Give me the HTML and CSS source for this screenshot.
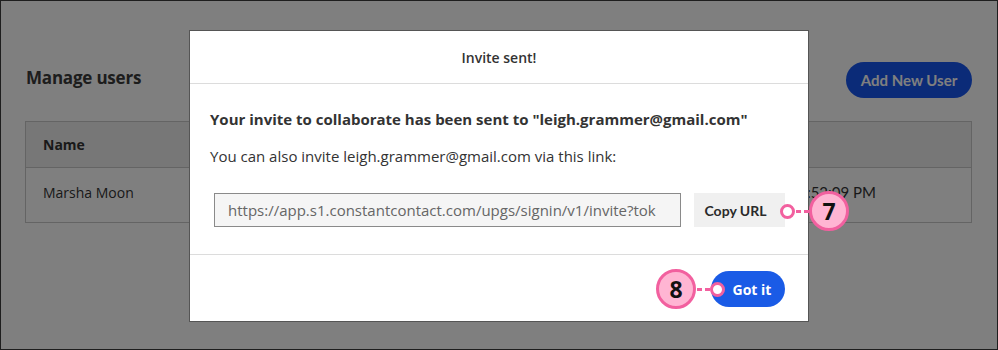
FILE: index.html
```html
<!DOCTYPE html>
<html>
<head>
<meta charset="utf-8">
<link rel="stylesheet" href="styles.css">
</head>
<body>
<div class="frame">
  <main class="page">
    <div class="page-head">
      <h1 class="title">Manage users</h1>
      <button class="add-btn">Add New User</button>
    </div>
    <div class="table">
      <div class="row head-row">
        <div class="cell name">Name</div>
        <div class="cell date"></div>
      </div>
      <div class="row body-row">
        <div class="cell name">Marsha Moon</div>
        <div class="cell date">1/15/2020, 12:52:09 PM</div>
      </div>
    </div>
  </main>
  <div class="overlay"></div>
  <div class="modal">
    <div class="modal-head">Invite sent!</div>
    <div class="modal-body">
      <p class="lead">Your invite to collaborate has been sent to "leigh.grammer@gmail.com"</p>
      <p class="sub">You can also invite leigh.grammer@gmail.com via this link:</p>
      <div class="link-row">
        <div class="url-box"><span class="url-text">https://app.s1.constantcontact.com/upgs/signin/v1/invite?tok</span></div>
        <button class="copy-btn">Copy URL</button>
      </div>
    </div>
    <div class="modal-foot">
      <button class="got-btn">Got it</button>
    </div>
  </div>
  <div class="callout c7">
    <span class="dot"></span><span class="dash"></span><span class="badge">7</span>
  </div>
  <div class="callout c8">
    <span class="badge">8</span><span class="dash"></span><span class="dot"></span>
  </div>
</div>
</body>
</html>
```
FILE: styles.css
```css
* { box-sizing: border-box; }
html, body { margin: 0; padding: 0; }
body {
  width: 998px;
  height: 350px;
  overflow: hidden;
  font-family: "Open Sans", "Noto Sans", sans-serif;
  background: #fff;
}
.frame {
  position: relative;
  width: 998px;
  height: 350px;
  border: 1px solid #1e1e1e;
  overflow: hidden;
}
.page {
  padding: 58px 25px 0 24px;
}
.page-head {
  display: flex;
  justify-content: space-between;
  align-items: center;
  height: 36px;
}
.title {
  margin: 0 0 0 1px;
  font-size: 17px;
  font-weight: 700;
  color: #3a3a3a;
  letter-spacing: -0.2px;
}
.add-btn {
  border: 0;
  background: #1656f0;
  color: #fff;
  font-family: "Lato", sans-serif;
  font-weight: 700;
  font-size: 15px;
  height: 36px;
  width: 126px;
  border-radius: 18px;
  margin-top: 6px;
}
.table {
  margin-top: 26px;
  border: 1px solid #c8c8c8;
}
.row {
  display: flex;
  justify-content: space-between;
  align-items: center;
  color: #333;
  font-size: 14px;
}
.head-row {
  height: 46px;
  background: #eeeeee;
  border-bottom: 1px solid #c8c8c8;
  font-weight: 700;
}
.body-row {
  height: 54px;
  padding-bottom: 6px;
}
.cell.name { padding-left: 17px; }
.cell.date { padding-right: 95px; font-family: "Lato", sans-serif; font-size: 15px; }
.overlay {
  position: absolute;
  inset: 0;
  background: rgba(0, 0, 0, 0.5);
}
.modal {
  position: absolute;
  left: 188px;
  top: 29px;
  width: 620px;
  height: 292px;
  background: #fff;
  border: 1px solid #555;
  display: flex;
  flex-direction: column;
  color: #333;
}
.modal-head {
  height: 53px;
  border-bottom: 1px solid #dcdcdc;
  display: flex;
  align-items: center;
  justify-content: center;
  font-size: 14px;
  font-weight: 600;
  color: #333;
}
.modal-body {
  padding: 24px 23px 0 20px;
  height: 171px;
  border-bottom: 1px solid #dcdcdc;
}
.lead {
  margin: 0;
  font-size: 15px;
  font-weight: 700;
  line-height: 22px;
}
.sub {
  margin: 15px 0 0;
  font-size: 15px;
  line-height: 22px;
}
.link-row {
  display: flex;
  gap: 13px;
  margin: 26px 0 0 4px;
}
.url-box {
  flex: 1;
  height: 34px;
  border: 1px solid #8a8a8a;
  background: #f5f5f5;
  padding: 0 0 0 13px;
  display: flex;
  align-items: center;
  overflow: hidden;
  white-space: nowrap;
}
.url-text {
  font-size: 15px;
  color: #666;
}
.copy-btn {
  width: 91px;
  height: 34px;
  border: 0;
  background: #f0f0f0;
  font-family: "Lato", sans-serif;
  font-weight: 700;
  font-size: 14px;
  color: #2a2a2a;
  padding: 0 8px 0 0;
}
.modal-foot {
  flex: 1;
  display: flex;
  justify-content: flex-end;
  align-items: flex-start;
  padding: 16px 23px 0 0;
}
.got-btn {
  width: 74px;
  height: 36px;
  border: 0;
  border-radius: 18px;
  background: #1a5be6;
  color: #fff;
  font-family: "Open Sans", sans-serif;
  font-weight: 700;
  font-size: 14px;
  padding: 0 0 0 8px;
}
.callout {
  position: absolute;
  display: flex;
  align-items: center;
}
.c7 { left: 779px; top: 190px; }
.c8 { left: 655px; top: 268px; }
.dot {
  width: 15px;
  height: 15px;
  border-radius: 50%;
  background: #fff;
  border: 3px solid #f2609f;
}
.dash {
  width: 14px;
  height: 3px;
  background: repeating-linear-gradient(90deg, transparent 0 1px, #f2609f 1px 6px, transparent 6px 8px);
}
.badge {
  width: 40px;
  height: 40px;
  border-radius: 50%;
  background: #ffb5d3;
  border: 3px solid #f2609f;
  display: flex;
  align-items: center;
  justify-content: center;
  font-family: "Open Sans", sans-serif;
  font-weight: 700;
  font-size: 23px;
  color: #111;
}
```
